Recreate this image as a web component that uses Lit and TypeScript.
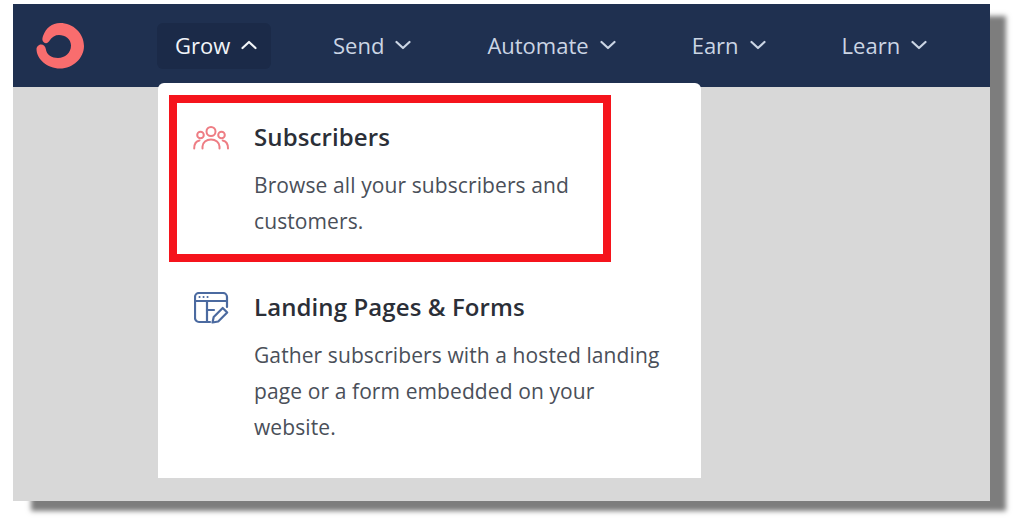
import { LitElement, html, css } from "lit";
import { customElement } from "lit/decorators.js";

const chev = (up: boolean) => html`<svg class="chev" width="16" height="10" viewBox="0 0 16 10" fill="none" stroke="currentColor" stroke-width="2.2" stroke-linecap="round" stroke-linejoin="round"><path d=${up ? "M1.5 8 8 2l6.5 6" : "M1.5 2 8 8l6.5-6"}></path></svg>`;

@customElement("app-root")
export class AppRoot extends LitElement {
  static styles = css`
    :host { display: block; width: 1024px; height: 519px; background: #fff; overflow: hidden; font-family: "Open Sans", "Noto Sans", sans-serif; }
    .page { padding: 4px 0 0 13px; }
    .frame { position: relative; width: 977px; height: 497px; background: #d8d8d8; box-shadow: 17px 11px 5px -1px #7d7d7d; }
    .nav { height: 83px; background: #1f3050; display: flex; align-items: flex-start; box-sizing: border-box; padding-left: 22px; }
    .logo { margin-top: 18px; width: 50px; height: 48px; flex: none; }
    .items { display: flex; gap: 76px; margin-left: 72px; margin-top: 19px; }
    .item { height: 46px; padding-bottom: 2px; display: flex; align-items: center; gap: 11px; color: #cbd5e4; font-size: 22px; line-height: 44px; font-weight: 500; box-sizing: border-box; border-radius: 6px; }
    .item.open { background: #1b2a48; color: #f2f5f9; width: 114px; padding-left: 18px; margin-right: -14px; }
    .menu { position: absolute; left: 145px; top: 79px; width: 543px; height: 395px; background: #fff; border-radius: 6px 6px 0 0; box-sizing: border-box; padding-top: 12px; }
    .entry { display: grid; box-sizing: border-box; }
    .sub { margin-left: 11px; width: 442px; height: 167px; border: 8px solid #f5141c; grid-template-columns: 77px 1fr; padding-top: 18px; }
    .sub .icon { padding: 5px 0 0 16px; }
    .land { padding-left: 36px; grid-template-columns: 60px 1fr; margin-top: 29px; }
    .land .icon { padding: 1px 0 0 0; }
    h3 { margin: 0; font-size: 24px; line-height: 32px; font-weight: 600; letter-spacing: 0.1px; color: #2b2f38; }
    p { margin: 14px 0 0; font-size: 21px; line-height: 36px; letter-spacing: 0.1px; color: #4a4f59; font-weight: 400; }
    .chev { flex: none; }
  `;

  render() {
    return html`<div class="page"><div class="frame">
      <div class="nav">
        <svg class="logo" viewBox="0 0 50 48">
          <path fill="#f96d6e" d="M25 1C38 1 49 11 49 24C49 36 38 46.500 25 46.500C12 46.500 1.500 37 1.500 27C1.500 25 3.500 22.500 6 22.500C8.500 22.500 10.500 24.500 10.800 27C11.500 33 17 36 23 36C30 36 36 31 36 23.500C36 17 30 13 24 13C20 13 17 15 15 18C13.500 21 11 22 9 20.500C7 19 7 17 8 14C11 6 17 1 25 1Z"></path>
        </svg>
        <div class="items">
          <div class="item open">Grow ${chev(true)}</div>
          <div class="item send">Send ${chev(false)}</div>
          <div class="item automate">Automate ${chev(false)}</div>
          <div class="item earn">Earn ${chev(false)}</div>
          <div class="item learn">Learn ${chev(false)}</div>
        </div>
      </div>
      <div class="menu">
        <div class="entry sub">
          <div class="icon">
            <svg width="37" height="26" viewBox="0 0 37 26" fill="none" stroke="#ee7d84" stroke-width="2" stroke-linecap="round">
              <circle cx="18" cy="5.500" r="4.500"></circle><circle cx="7.500" cy="9" r="3.300"></circle><circle cx="28.500" cy="9" r="3.300"></circle>
              <path d="M9.500 22.500v-2c0-4 3.800-7 8.500-7s8.500 3 8.500 7v2"></path>
              <path d="M1.200 22.500c0-5 2.300-7.500 5.300-8"></path><path d="M35 22.500c0-5-2.300-7.500-5.300-8"></path>
            </svg>
          </div>
          <div><h3>Subscribers</h3><p>Browse all your subscribers and<br>customers.</p></div>
        </div>
        <div class="entry land">
          <div class="icon">
            <svg width="35" height="32" viewBox="0 0 35 32" fill="none" stroke="#4b6aa0" stroke-width="2.200" stroke-linecap="round" stroke-linejoin="round">
              <path d="M16 30H5a4 4 0 0 1-4-4V5a4 4 0 0 1 4-4h24a4 4 0 0 1 4 4v10"></path>
              <path d="M1 9h32"></path><path d="M13 9v21"></path><path d="M13 18h7"></path>
              <path d="M18.500 30.500l1.200-5.500 9-9 4.500 4.500-9 9Z"></path>
              <path d="M5.500 5h.1M9.500 5h.1M13.500 5h.1" stroke-width="2"></path>
            </svg>
          </div>
          <div><h3>Landing Pages &amp; Forms</h3><p>Gather subscribers with a hosted landing<br>page or a form embedded on your<br>website.</p></div>
        </div>
      </div>
    </div></div>`;
  }
}
